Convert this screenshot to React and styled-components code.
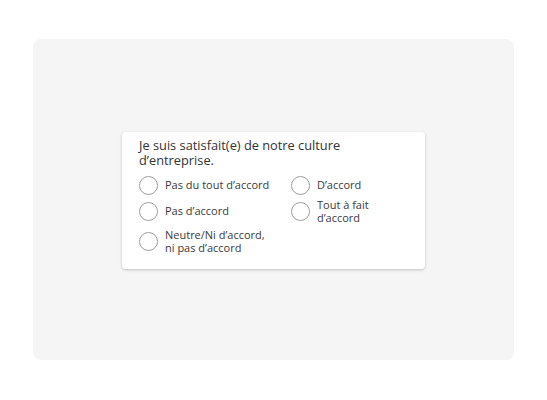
import React from "react";
import styled, { createGlobalStyle } from "styled-components";

const Global = createGlobalStyle`
  html, body { margin: 0; padding: 0; background: #ffffff; }
  * { box-sizing: border-box; }
`;

const Page = styled.div`
  width: 547px;
  height: 400px;
  padding: 39px 33px 40px 33px;
  font-family: "Open Sans", "Liberation Sans", sans-serif;
`;

const Panel = styled.div`
  width: 481px;
  height: 321px;
  background: #f5f5f5;
  border-radius: 8px;
  display: flex;
  align-items: center;
  justify-content: center;
`;

const Card = styled.div`
  width: 303px;
  background: #ffffff;
  border-radius: 4px;
  box-shadow: 0 1px 3px rgba(0, 0, 0, 0.22);
  padding: 6px 17px 14px 17px;
  margin-top: 1px;
`;

const Title = styled.div`
  font-size: 12.8px;
  line-height: 15px;
  color: #333333;
`;

const Options = styled.div`
  display: grid;
  grid-template-columns: 152px 1fr;
  grid-template-rows: repeat(3, auto);
  grid-auto-flow: column;
  row-gap: 3px;
  margin-top: 8px;
`;

const Option = styled.label`
  display: flex;
  align-items: center;
  gap: 7px;
  min-height: 19px;
`;

const Radio = styled.span`
  flex: none;
  width: 19px;
  height: 19px;
  border-radius: 50%;
  border: 1px solid #9e9e9e;
  background: #ffffff;
`;

const Label = styled.span`
  font-size: 11px;
  line-height: 13.5px;
  color: #3a3a3a;
`;

const items = [
  ["Pas du tout d’accord"],
  ["Pas d’accord"],
  ["Neutre/Ni d’accord,", "ni pas d’accord"],
  ["D’accord"],
  ["Tout à fait", "d’accord"],
];

export default function App() {
  return (
    <Page>
      <Global />
      <Panel>
        <Card>
          <Title>
            Je suis satisfait(e) de notre culture
            <br />
            d’entreprise.
          </Title>
          <Options>
            {items.map((lines, i) => (
              <Option key={i}>
                <Radio />
                <Label>
                  {lines.map((l, j) => (
                    <React.Fragment key={j}>
                      {j > 0 && <br />}
                      {l}
                    </React.Fragment>
                  ))}
                </Label>
              </Option>
            ))}
          </Options>
        </Card>
      </Panel>
    </Page>
  );
}
